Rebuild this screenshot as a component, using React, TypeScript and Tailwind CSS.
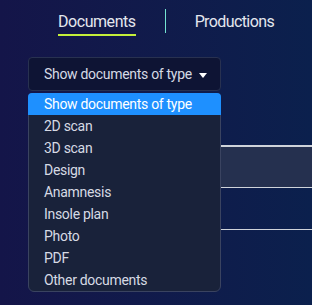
import React from "react";

const items = [
  "2D scan",
  "3D scan",
  "Design",
  "Anamnesis",
  "Insole plan",
  "Photo",
  "PDF",
  "Other documents",
];

export default function App() {
  return (
    <div
      className="relative h-[305px] w-full overflow-hidden bg-gradient-to-r from-[#141549] to-[#0b204d] text-[#d6dae4]"
      style={{ fontFamily: "Roboto, 'Noto Sans', sans-serif" }}
    >
      <div className="flex items-start pl-[58px] pt-[9px] gap-[29px] tracking-[-0.45px]">
        <div className="pt-px">
          <div className="text-[16px] leading-[24px] text-[#e4e7ee] border-b-2 border-[#c4ef3a]">
            Documents
          </div>
        </div>
        <div className="w-px h-[24px] bg-[#74e4d2]" />
        <div className="pt-px text-[16px] leading-[24px] text-[#e4e7ee] tracking-[-0.6px]">Productions</div>
      </div>

      <div className="pl-[28px] mt-[21px]">
        <div className="relative w-[193px]">
          <div className="relative flex h-[34px] items-center rounded-[4px] border border-[#283150] bg-[#0e1434] pl-[15px] text-[14px] tracking-[-0.3px]">
            <span>Show documents of type</span>
            <svg className="absolute right-[13px] top-[15px]" width="8" height="5" viewBox="0 0 8 5">
              <path d="M0 0 L8 0 L4 5 Z" fill="#ffffff" />
            </svg>
          </div>
        </div>

        <div className="mt-[54px] border-t-2 border-[#cfd3da]">
          <div className="h-[41px] bg-[#25304f] border-b border-[#cfd3da]" />
          <div className="h-[42px] border-b border-[#cfd3da]" />
        </div>
      </div>

      <div className="absolute left-[28px] top-[93px] w-[193px] rounded-b-[6px] rounded-t-[4px] border border-[#3a4360] bg-[#19223a] text-[14px] tracking-[-0.3px]">
        <div className="h-[22px] leading-[22px] rounded-t-[4px] bg-[#1e90ff] pl-[16px] text-white -mx-px -mt-px">
          Show documents of type
        </div>
        {items.map((it) => (
          <div key={it} className="h-[22px] leading-[22px] pl-[15px]">
            {it}
          </div>
        ))}
      </div>
    </div>
  );
}
